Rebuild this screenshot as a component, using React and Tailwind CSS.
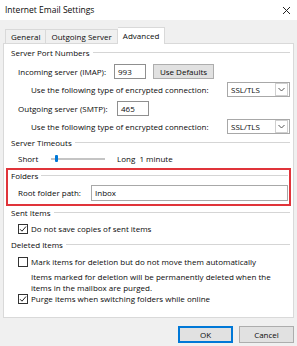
import React from "react";

const Header = ({ title }) => (
  <div className="flex items-center h-[14px] pl-[7px] pr-[3px]">
    <span className="whitespace-nowrap">{title}</span>
    <div className="flex-1 ml-[3px] border-t border-[#d5d5d5] border-b-white border-b h-[2px]" />
  </div>
);

const Check = ({ checked }) => (
  <div className="w-[10px] h-[10px] border border-[#333] bg-white flex items-center justify-center shrink-0">
    {checked && (
      <svg width="8" height="8" viewBox="0 0 8 8">
        <path d="M1 4.2 L3 6.2 L7 1.5" fill="none" stroke="#222" strokeWidth="1" />
      </svg>
    )}
  </div>
);

const Select = () => (
  <div className="w-[63px] h-[15px] border border-[#a8a8a8] bg-white flex items-center">
    <span className="flex-1 pl-[3px]">SSL/TLS</span>
    <div className="w-[13px] h-[13px] mr-px border border-[#cfcfcf] bg-white flex items-center justify-center">
      <svg width="7" height="5" viewBox="0 0 7 5">
        <path d="M0.5 1 L3.5 4 L6.5 1" fill="none" stroke="#555" strokeWidth="1" />
      </svg>
    </div>
  </div>
);

export default function App() {
  return (
    <div
      className="w-[297px] h-[346px] bg-[#f0f0f0] text-[8px] text-[#0a0a0a] leading-none overflow-hidden"
      style={{ fontFamily: '"Open Sans", "Noto Sans", sans-serif' }}
    >
      <div className="h-[20px] bg-white flex items-center justify-between pl-[5px] pr-[6px]">
        <span className="text-[8.5px]">Internet Email Settings</span>
        <svg width="9" height="9" viewBox="0 0 9 9">
          <path d="M1 1 L8 8 M8 1 L1 8" stroke="#222" strokeWidth="1" />
        </svg>
      </div>
      <div className="flex items-end h-[23px] pl-[5px]">
        <div className="h-[14px] px-[5px] border border-[#d9d9d9] border-b-0 flex items-center">General</div>
        <div className="h-[14px] px-[5px] border border-[#d9d9d9] border-l-0 border-b-0 flex items-center">Outgoing Server</div>
        <div className="h-[17px] px-[5px] border border-[#d9d9d9] border-l-0 border-b-0 bg-white flex items-center -mb-px relative z-10">Advanced</div>
      </div>
      <div className="mx-[3px] h-[275px] border border-[#d9d9d9] bg-white pt-[2px]">
        <Header title="Server Port Numbers" />
        <div className="flex items-center h-[17px] mt-[3px] pl-[14px]">
          <span className="w-[96px]">Incoming server (IMAP):</span>
          <div className="w-[32px] h-[15px] border border-[#8f8f8f] flex items-center pl-[3px]">993</div>
          <div className="ml-[7px] w-[61px] h-[15px] border border-[#adadad] bg-[#e1e1e1] flex items-center justify-center">Use Defaults</div>
        </div>
        <div className="flex items-center h-[17px] mt-px pl-[27px] pr-[3px]">
          <span className="flex-1 whitespace-nowrap">Use the following type of encrypted connection:</span>
          <Select />
        </div>
        <div className="flex items-center h-[17px] mt-[2px] pl-[14px]">
          <span className="w-[99px]">Outgoing server (SMTP):</span>
          <div className="w-[32px] h-[15px] border border-[#8f8f8f] flex items-center pl-[3px]">465</div>
        </div>
        <div className="flex items-center h-[17px] mt-px pl-[27px] pr-[3px]">
          <span className="flex-1 whitespace-nowrap">Use the following type of encrypted connection:</span>
          <Select />
        </div>
        <div className="mt-px">
          <Header title="Server Timeouts" />
        </div>
        <div className="flex items-center h-[16px] mt-px pl-[14px]">
          <span className="w-[33px]">Short</span>
          <div className="relative w-[54px] h-[8px] flex items-center">
            <div className="w-full h-[2px] bg-[#c4c4c4]" />
            <div className="absolute left-[4px] top-0 w-[3px] h-[7px] rounded-[1px] bg-[#0078d7]" />
          </div>
          <span className="ml-[12px]">Long&nbsp;&nbsp;1 minute</span>
        </div>
        <div className="mx-[2px] mt-px h-[38px] border-2 border-[#e0343a]">
          <div className="flex items-center h-[12px] pl-[3px] pr-[1px]">
            <span>Folders</span>
            <div className="flex-1 ml-[3px] border-t border-[#d5d5d5] h-[2px]" />
          </div>
          <div className="flex items-center h-[17px] mt-[2px] pl-[10px] pr-[1px]">
            <span className="w-[73px]">Root folder path:</span>
            <div className="flex-1 h-[16px] border border-[#a8a8a8] flex items-center pl-[3px]">Inbox</div>
          </div>
        </div>
        <Header title="Sent Items" />
        <div className="flex items-center h-[16px] mt-px pl-[14px] gap-[3px]">
          <Check checked />
          <span>Do not save copies of sent items</span>
        </div>
        <div className="mt-px">
          <Header title="Deleted Items" />
        </div>
        <div className="flex items-center h-[16px] mt-[2px] pl-[14px] gap-[3px]">
          <Check />
          <span>Mark items for deletion but do not move them automatically</span>
        </div>
        <div className="pl-[27px] leading-[11px] mt-px">
          <div>Items marked for deletion will be permanently deleted when the</div>
          <div>items in the mailbox are purged.</div>
        </div>
        <div className="flex items-center h-[14px] -mt-px pl-[14px] gap-[3px]">
          <Check checked />
          <span>Purge items when switching folders while online</span>
        </div>
      </div>
      <div className="flex justify-end gap-[6px] pr-[3px] mt-[8px]">
        <div className="w-[55px] h-[17px] border-2 border-[#0078d7] bg-[#e1e1e1] flex items-center justify-center">OK</div>
        <div className="w-[55px] h-[17px] border border-[#adadad] bg-[#e1e1e1] flex items-center justify-center">Cancel</div>
      </div>
    </div>
  );
}
